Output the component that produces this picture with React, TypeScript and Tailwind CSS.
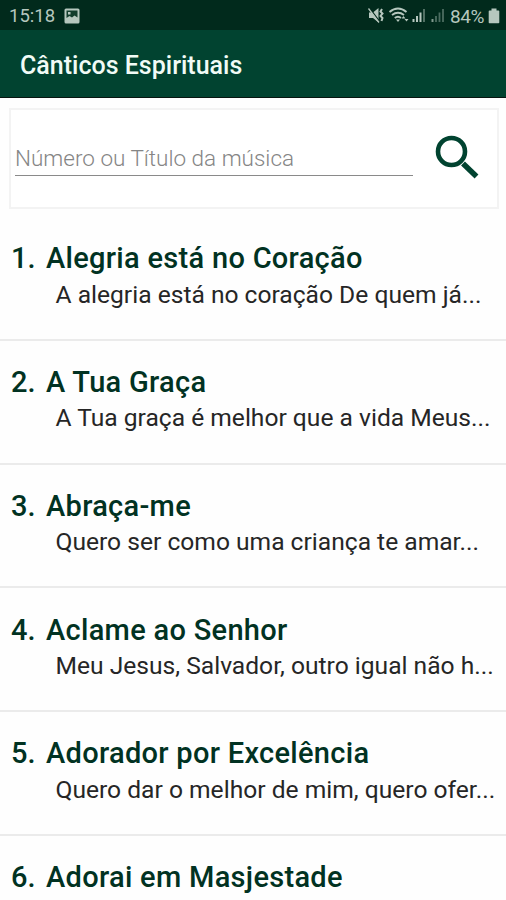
const songs = [
  { title: "Alegria está no Coração", verse: "A alegria está no coração De quem já..." },
  { title: "A Tua Graça", verse: "A Tua graça é melhor que a vida Meus..." },
  { title: "Abraça-me", verse: "Quero ser como uma criança te amar..." },
  { title: "Aclame ao Senhor", verse: "Meu Jesus, Salvador, outro igual não h..." },
  { title: "Adorador por Excelência", verse: "Quero dar o melhor de mim, quero ofer..." },
  { title: "Adorai em Masjestade", verse: "" },
];

function StatusIcons() {
  return (
    <svg width="80" height="20" viewBox="366 6 80 20" fill="none" stroke="#b6c7be">
      {/* muted speaker with vibration marks */}
      <path d="M369 12.500h4l5.500-4.500v14.500l-5.500-4.500h-4z" fill="#b6c7be" stroke="none" />
      <path d="M369.500 8l10 13.500" strokeWidth="1.3" stroke="#03291c" />
      <path d="M368.500 8.500l10.500 14" strokeWidth="1.3" />
      <path d="M382 9l-1.500 2.500 2 2-2 2.500 2 2-1 3" strokeWidth="2" />
      {/* wifi */}
      <path d="M389.500 12q8.500-7 17 0M392 15q6-4.500 12 0M394.800 18q3.200-2.600 6.200 0" strokeWidth="1.9" />
      <path d="M396 19.500h4l-2 2.500zM401.500 18.500l2-2.500 2 2.500zM404.500 19h4l-2 2.500z" fill="#b6c7be" stroke="none" />
      {/* two signal meters */}
      <path d="M413.500 22v-3M417 22v-6" strokeWidth="2" />
      <path d="M420.500 22V12.500" strokeWidth="2" />
      <path d="M424 22V9" strokeWidth="1.800" opacity=".5" />
      <path d="M432.500 22v-3" strokeWidth="2" opacity=".7" />
      <path d="M436 22v-6M439.500 22V12.500M443 22V9" strokeWidth="1.800" opacity=".42" />
    </svg>
  );
}

export default function App() {
  return (
    <div className="flex h-[900px] w-[506px] flex-col overflow-hidden bg-[#fefefe] font-['Roboto',sans-serif]">
      <div className="flex h-[30px] shrink-0 items-center bg-[#012a1c] pl-[9px] pr-[6px] pt-px text-[#b6c7be]">
        <span className="w-[46px] whitespace-nowrap pt-[2px] text-[18.5px] leading-none">15:18</span>
        <svg className="ml-[9px]" width="16" height="16" viewBox="0 0 16 16">
          <rect x=".5" y=".5" width="15" height="15" rx="1.500" fill="#b6c7be" />
          <path d="M2.500 2.500h11v7l-3-2-2.500 2-2.500-1.500-3 2z" fill="#123d2c" />
          <path d="M4 4h2.500v2.500H4z" fill="#b6c7be" />
        </svg>
        <div className="ml-auto flex items-center">
          <StatusIcons />
          <span className="ml-[4px] w-[35px] whitespace-nowrap pt-[2px] text-[19px] leading-none tracking-[-0.4px]">84%</span>
          <svg className="ml-[3px]" width="12" height="17" viewBox="0 0 12 17">
            <path d="M3.500 1.500h5v2H10.500a.8 .8 0 0 1 .8 .8V15.500a.8 .8 0 0 1-.8 .8H1.500a.8 .8 0 0 1-.8-.8V4.300a.8 .8 0 0 1 .8-.8h2z" fill="#b6c7be" />
          </svg>
        </div>
      </div>
      <header className="flex h-[68px] shrink-0 items-center border-b-[1.5px] border-[#071510] bg-[#014330] pl-[20px]">
        <h1 className="pt-[4px] text-[25px] font-medium leading-none text-[#f1fbf6]">Cânticos Espirituais</h1>
      </header>
      <div className="ml-[9px] mr-[7px] mt-[10px] flex h-[101px] shrink-0 border-2 border-[#f3f3f3] bg-white">
        <div className="ml-[4px] mt-[32px] flex h-[34px] w-[398px] items-center border-b border-[#8a8a8a]">
          <span className="whitespace-nowrap text-[22.5px] font-light text-[#858585]">Número ou Título da música</span>
        </div>
        <svg className="ml-[22px] mt-[25px]" width="44" height="44" viewBox="0 0 44 44" fill="none" stroke="#014330">
          <circle cx="16.500" cy="16.500" r="13.500" strokeWidth="4.600" />
          <path d="M28 28.500l13.500 13" strokeWidth="5.500" />
        </svg>
      </div>
      <ol className="mt-[8px] shrink-0">
        {songs.map((song, i) => (
          <li key={song.title} className="h-[123.75px] border-b-2 border-[#ebebeb] pt-[24px]">
            <div className="flex h-[36px] items-center whitespace-nowrap pl-[11px] text-[29px] font-medium tracking-[0.3px] text-[#013222]">
              <span className="w-[35px] tracking-normal">{i + 1}.</span>
              <span>{song.title}</span>
            </div>
            <p className="flex h-[36px] items-center whitespace-nowrap pl-[55.5px] text-[24.6px] text-[#262626]">{song.verse}</p>
          </li>
        ))}
      </ol>
    </div>
  );
}
